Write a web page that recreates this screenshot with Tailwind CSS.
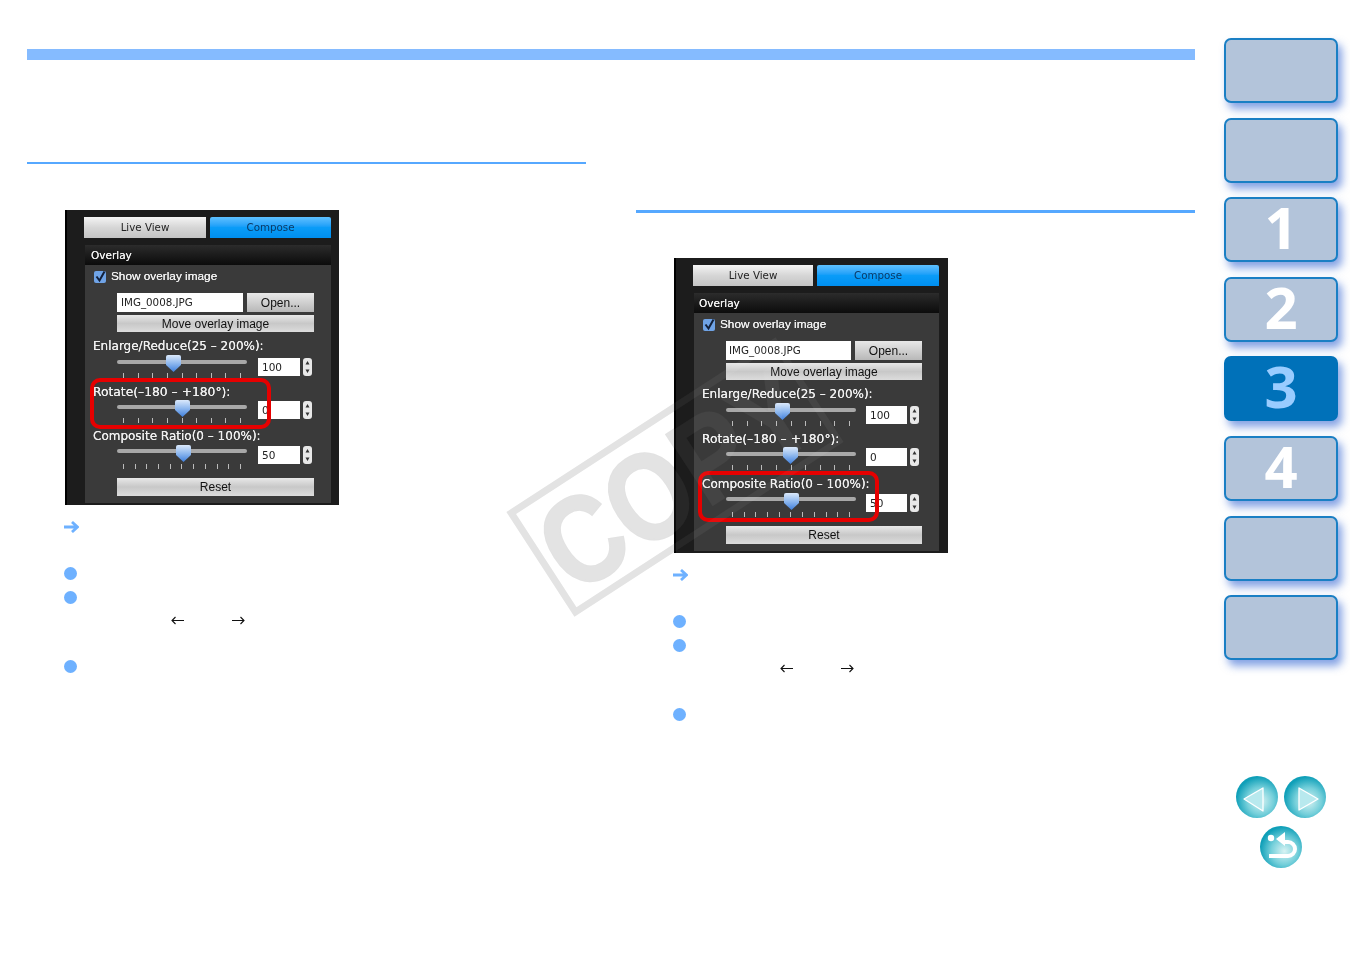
<!DOCTYPE html>
<html lang="en">
<head>
  <meta charset="UTF-8" />
  <title>Compose overlay</title>
  <script src="https://cdn.jsdelivr.net/npm/@tailwindcss/browser@4"></script>
</head>
<body class="bg-white font-['Liberation_Sans',sans-serif] overflow-hidden">

  <!-- shared gradients -->
  <svg class="absolute w-0 h-0">
    <defs>
      <linearGradient id="thumb" x1="0" y1="0" x2="0" y2="1"><stop offset="0" stop-color="#dbe9fb"/><stop offset="0.5" stop-color="#8db7ee"/><stop offset="1" stop-color="#3f7fdc"/></linearGradient>
      <radialGradient id="disc" cx="0.58" cy="0.6" r="0.58"><stop offset="0" stop-color="#d8f3f3"/><stop offset="0.55" stop-color="#74cfda"/><stop offset="1" stop-color="#0f9fb8"/></radialGradient>
    </defs>
  </svg>

  <!-- COPY watermark, under the panels -->
  <svg class="absolute inset-0 pointer-events-none" width="1350" height="954" viewBox="0 0 1350 954">
    <g transform="rotate(-33 675 477)" fill="#e2e2e2">
      <rect x="518" y="418" width="314" height="118" fill="none" stroke="#e2e2e2" stroke-width="7"/>
      <text x="675" y="522" text-anchor="middle" font-family="Liberation Sans" font-weight="700" font-size="124" textLength="298" lengthAdjust="spacingAndGlyphs" stroke="#e2e2e2" stroke-width="2">COPY</text>
    </g>
  </svg>

  <div class="flex w-[1350px] h-[954px] relative">
    <main class="w-[1168px] ml-[27px] pt-[49px]">
      <div class="h-[11px] bg-[#85bbff]"></div>

      <div class="flex gap-[50px]">
        <!-- left column -->
        <section class="w-[559px] pt-[102px]">
          <div class="h-[2px] bg-[#56a8ff]"></div>
          <div class="ml-[38px] mt-[46px] w-[274px] h-[295px] relative bg-[#1c1c1c] border-l-2 border-black text-[#f0f0f0] blur-[0.3px]">
            <div class="flex gap-[4px] pt-[7px] pl-[17px] font-['DejaVu_Sans',sans-serif] text-[10.3px]">
              <div class="w-[122px] h-[21px] pt-px flex items-center justify-center text-[#222] bg-linear-to-b from-[#f4f4f4] via-[#d6d6d6] to-[#c4c4c4]">Live View</div>
              <div class="w-[121px] h-[21px] pt-px flex items-center justify-center text-[#0b3a66] bg-linear-to-b from-[#5cc0ff] via-[#0a9cf8] to-[#008ff0] rounded-t-[2px]">Compose</div>
            </div>
            <div class="ml-[18px] mt-[7px] w-[246px]">
              <div class="h-[20px] pt-px flex items-center pl-[6px] text-[10.5px] bg-linear-to-b from-[#2c2c2c] to-[#0c0c0c] font-['DejaVu_Sans',sans-serif] [text-shadow:0_0_0.6px_#fff]">Overlay</div>
              <div class="h-[238px] bg-[#3a3a3a] pt-[3px]">
                <div class="h-[18px] flex items-center pl-[9px] gap-[5px] text-[11.8px] [text-shadow:0_0_0.5px_#fff]">
                  <svg width="12" height="12" viewBox="0 0 12 12"><rect width="12" height="12" rx="2" fill="#6fa3e6"/><path d="M2.5 5.5 L5.5 9.5 L10.5 0.5" fill="none" stroke="#12203a" stroke-width="2"/></svg>
                  <span>Show overlay image</span>
                </div>
                <div class="flex gap-[4px] ml-[32px] mt-[7px] h-[19px] text-[11.5px]">
                  <div class="w-[126px] bg-white text-[#222] pt-px flex items-center pl-[4px] font-['DejaVu_Sans',sans-serif] text-[10.3px]">IMG_0008.JPG</div>
                  <div class="w-[67px] flex items-center justify-center text-[#111] text-[12px] bg-linear-to-b from-[#e8e8e8] via-[#d0d0d0] to-[#b8b8b8]">Open...</div>
                </div>
                <div class="ml-[32px] mt-[3px] w-[197px] h-[17px] flex items-center justify-center text-[#111] text-[12px] bg-linear-to-b from-[#e8e8e8] via-[#c8c8c8] to-[#dcdcdc]">Move overlay image</div>

                <div class="mt-[5px] ml-[8px] h-[17px] flex items-center font-['DejaVu_Sans',sans-serif] text-[12px] [text-shadow:0_0_0.6px_#fff]">Enlarge/Reduce(25 – 200%):</div>
                <div class="flex ml-[32px] h-[26px]">
                  <div class="w-[130px] relative pt-[6px]">
                    <div class="h-[4px] rounded-full bg-[#a8a8a8]"></div>
                    <svg class="absolute left-[49px] top-[1px]" width="15" height="17" viewBox="0 0 15 17"><path d="M2 0 H13 Q15 0 15 2 V10 L7.5 17 L0 10 V2 Q0 0 2 0 Z" fill="url(#thumb)"/></svg>
                    <div class="flex justify-between px-[6px] mt-[9px]"><i class="w-px h-[5px] bg-[#bbb]"></i><i class="w-px h-[5px] bg-[#bbb]"></i><i class="w-px h-[5px] bg-[#bbb]"></i><i class="w-px h-[5px] bg-[#bbb]"></i><i class="w-px h-[5px] bg-[#bbb]"></i><i class="w-px h-[5px] bg-[#bbb]"></i><i class="w-px h-[5px] bg-[#bbb]"></i><i class="w-px h-[5px] bg-[#bbb]"></i><i class="w-px h-[5px] bg-[#bbb]"></i></div>
                  </div>
                  <div class="ml-[11px] mt-[4px] w-[42px] h-[18px] pt-px bg-white text-[#222] flex items-center pl-[4px] font-['DejaVu_Sans',sans-serif] text-[10.5px]">100</div>
                  <svg class="ml-[3px] mt-[4px]" width="9" height="18" viewBox="0 0 9 18"><rect width="9" height="18" rx="3" fill="#e8e8e8"/><path d="M4.5 3 L6.5 6.5 H2.5 Z M4.5 15 L6.5 11.5 H2.5 Z" fill="#333"/></svg>
                </div>

                <div class="mt-[4px] ml-[8px] h-[17px] flex items-center font-['DejaVu_Sans',sans-serif] text-[12.3px] [text-shadow:0_0_0.6px_#fff]">Rotate(–180 – +180°):</div>
                <div class="flex ml-[32px] h-[26px]">
                  <div class="w-[130px] relative pt-[4px]">
                    <div class="h-[4px] rounded-full bg-[#a8a8a8]"></div>
                    <svg class="absolute left-[58px] top-[-1px]" width="15" height="17" viewBox="0 0 15 17"><path d="M2 0 H13 Q15 0 15 2 V10 L7.5 17 L0 10 V2 Q0 0 2 0 Z" fill="url(#thumb)"/></svg>
                    <div class="flex justify-between px-[6px] mt-[9px]"><i class="w-px h-[5px] bg-[#bbb]"></i><i class="w-px h-[5px] bg-[#bbb]"></i><i class="w-px h-[5px] bg-[#bbb]"></i><i class="w-px h-[5px] bg-[#bbb]"></i><i class="w-px h-[5px] bg-[#bbb]"></i><i class="w-px h-[5px] bg-[#bbb]"></i><i class="w-px h-[5px] bg-[#bbb]"></i><i class="w-px h-[5px] bg-[#bbb]"></i><i class="w-px h-[5px] bg-[#bbb]"></i></div>
                  </div>
                  <div class="ml-[11px] w-[42px] h-[18px] pt-px bg-white text-[#222] flex items-center pl-[4px] font-['DejaVu_Sans',sans-serif] text-[10.5px]">0</div>
                  <svg class="ml-[3px]" width="9" height="18" viewBox="0 0 9 18"><rect width="9" height="18" rx="3" fill="#e8e8e8"/><path d="M4.5 3 L6.5 6.5 H2.5 Z M4.5 15 L6.5 11.5 H2.5 Z" fill="#333"/></svg>
                </div>

                <div class="ml-[8px] h-[17px] flex items-center font-['DejaVu_Sans',sans-serif] text-[12px] [text-shadow:0_0_0.6px_#fff]">Composite Ratio(0 – 100%):</div>
                <div class="flex ml-[32px] h-[34px]">
                  <div class="w-[130px] relative pt-[5px]">
                    <div class="h-[4px] rounded-full bg-[#a8a8a8]"></div>
                    <svg class="absolute left-[59px] top-[1px]" width="15" height="17" viewBox="0 0 15 17"><path d="M2 0 H13 Q15 0 15 2 V10 L7.5 17 L0 10 V2 Q0 0 2 0 Z" fill="url(#thumb)"/></svg>
                    <div class="flex justify-between px-[6px] mt-[11px]"><i class="w-px h-[5px] bg-[#bbb]"></i><i class="w-px h-[5px] bg-[#bbb]"></i><i class="w-px h-[5px] bg-[#bbb]"></i><i class="w-px h-[5px] bg-[#bbb]"></i><i class="w-px h-[5px] bg-[#bbb]"></i><i class="w-px h-[5px] bg-[#bbb]"></i><i class="w-px h-[5px] bg-[#bbb]"></i><i class="w-px h-[5px] bg-[#bbb]"></i><i class="w-px h-[5px] bg-[#bbb]"></i><i class="w-px h-[5px] bg-[#bbb]"></i><i class="w-px h-[5px] bg-[#bbb]"></i></div>
                  </div>
                  <div class="ml-[11px] mt-[2px] w-[42px] h-[18px] pt-px bg-white text-[#222] flex items-center pl-[4px] font-['DejaVu_Sans',sans-serif] text-[10.5px]">50</div>
                  <svg class="ml-[3px] mt-[2px]" width="9" height="18" viewBox="0 0 9 18"><rect width="9" height="18" rx="3" fill="#e8e8e8"/><path d="M4.5 3 L6.5 6.5 H2.5 Z M4.5 15 L6.5 11.5 H2.5 Z" fill="#333"/></svg>
                </div>
                <div class="ml-[32px] w-[197px] h-[18px] flex items-center justify-center text-[#111] text-[12px] bg-linear-to-b from-[#e8e8e8] via-[#c8c8c8] to-[#dcdcdc]">Reset</div>
              </div>
            </div>
            <!-- red highlight -->
            <div class="absolute left-[23px] top-[168px] w-[181px] h-[51px] border-[4px] border-[#e60000] rounded-[10px]"></div>
          </div>

          <div class="ml-[37px] mt-[10px] h-[24px] flex items-center">
            <svg width="15" height="12" viewBox="0 0 15 12"><path d="M0 6 H12 M8 1 L13.5 6 L8 11" fill="none" stroke="#6eb1ff" stroke-width="2.8"/></svg>
          </div>
          <div class="ml-[37px] mt-[22px] h-[24px] flex items-center"><div class="w-[13px] h-[13px] rounded-full bg-[#6eb1ff]"></div></div>
          <div class="ml-[37px] h-[24px] flex items-center"><div class="w-[13px] h-[13px] rounded-full bg-[#6eb1ff]"></div></div>
          <div class="ml-[144px] h-[22px] flex items-center gap-[48px]">
            <svg width="13" height="9" viewBox="0 0 13 9"><path d="M13 4.5 H1 M4.5 1 L1 4.5 L4.5 8" fill="none" stroke="#111" stroke-width="1.1"/></svg>
            <svg width="13" height="9" viewBox="0 0 13 9"><path d="M0 4.5 H12 M8.5 1 L12 4.5 L8.5 8" fill="none" stroke="#111" stroke-width="1.1"/></svg>
          </div>
          <div class="ml-[37px] mt-[23px] h-[24px] flex items-center"><div class="w-[13px] h-[13px] rounded-full bg-[#6eb1ff]"></div></div>
        </section>

        <!-- right column -->
        <section class="w-[559px] pt-[150px]">
          <div class="h-[3px] bg-[#56a8ff]"></div>
          <div class="ml-[38px] mt-[45px] w-[274px] h-[295px] relative bg-[#1c1c1c] border-l-2 border-black text-[#f0f0f0] blur-[0.3px]">
            <div class="flex gap-[4px] pt-[7px] pl-[17px] font-['DejaVu_Sans',sans-serif] text-[10.3px]">
              <div class="w-[120px] h-[21px] pt-px flex items-center justify-center text-[#222] bg-linear-to-b from-[#f4f4f4] via-[#d6d6d6] to-[#c4c4c4]">Live View</div>
              <div class="w-[122px] h-[21px] pt-px flex items-center justify-center text-[#0b3a66] bg-linear-to-b from-[#5cc0ff] via-[#0a9cf8] to-[#008ff0] rounded-t-[2px]">Compose</div>
            </div>
            <div class="ml-[18px] mt-[7px] w-[245px]">
              <div class="h-[20px] pt-px flex items-center pl-[5px] text-[10.5px] bg-linear-to-b from-[#2c2c2c] to-[#0c0c0c] font-['DejaVu_Sans',sans-serif] [text-shadow:0_0_0.6px_#fff]">Overlay</div>
              <div class="h-[238px] bg-[#3a3a3a] pt-[3px]">
                <div class="h-[18px] flex items-center pl-[9px] gap-[5px] text-[11.8px] [text-shadow:0_0_0.5px_#fff]">
                  <svg width="12" height="12" viewBox="0 0 12 12"><rect width="12" height="12" rx="2" fill="#6fa3e6"/><path d="M2.5 5.5 L5.5 9.5 L10.5 0.5" fill="none" stroke="#12203a" stroke-width="2"/></svg>
                  <span>Show overlay image</span>
                </div>
                <div class="flex gap-[4px] ml-[32px] mt-[7px] h-[19px] text-[11.5px]">
                  <div class="w-[125px] bg-white text-[#222] pt-px flex items-center pl-[3px] font-['DejaVu_Sans',sans-serif] text-[10.3px]">IMG_0008.JPG</div>
                  <div class="w-[67px] flex items-center justify-center text-[#111] text-[12px] bg-linear-to-b from-[#e8e8e8] via-[#d0d0d0] to-[#b8b8b8]">Open...</div>
                </div>
                <div class="ml-[32px] mt-[3px] w-[196px] h-[17px] flex items-center justify-center text-[#111] text-[12px] bg-linear-to-b from-[#e8e8e8] via-[#c8c8c8] to-[#dcdcdc]">Move overlay image</div>

                <div class="mt-[5px] ml-[8px] h-[17px] flex items-center font-['DejaVu_Sans',sans-serif] text-[12px] [text-shadow:0_0_0.6px_#fff]">Enlarge/Reduce(25 – 200%):</div>
                <div class="flex ml-[32px] h-[26px]">
                  <div class="w-[130px] relative pt-[6px]">
                    <div class="h-[4px] rounded-full bg-[#a8a8a8]"></div>
                    <svg class="absolute left-[49px] top-[1px]" width="15" height="17" viewBox="0 0 15 17"><path d="M2 0 H13 Q15 0 15 2 V10 L7.5 17 L0 10 V2 Q0 0 2 0 Z" fill="url(#thumb)"/></svg>
                    <div class="flex justify-between px-[6px] mt-[9px]"><i class="w-px h-[5px] bg-[#bbb]"></i><i class="w-px h-[5px] bg-[#bbb]"></i><i class="w-px h-[5px] bg-[#bbb]"></i><i class="w-px h-[5px] bg-[#bbb]"></i><i class="w-px h-[5px] bg-[#bbb]"></i><i class="w-px h-[5px] bg-[#bbb]"></i><i class="w-px h-[5px] bg-[#bbb]"></i><i class="w-px h-[5px] bg-[#bbb]"></i><i class="w-px h-[5px] bg-[#bbb]"></i></div>
                  </div>
                  <div class="ml-[10px] mt-[4px] w-[41px] h-[18px] pt-px bg-white text-[#222] flex items-center pl-[4px] font-['DejaVu_Sans',sans-serif] text-[10.5px]">100</div>
                  <svg class="ml-[3px] mt-[4px]" width="9" height="18" viewBox="0 0 9 18"><rect width="9" height="18" rx="3" fill="#e8e8e8"/><path d="M4.5 3 L6.5 6.5 H2.5 Z M4.5 15 L6.5 11.5 H2.5 Z" fill="#333"/></svg>
                </div>

                <div class="mt-[3px] ml-[8px] h-[17px] flex items-center font-['DejaVu_Sans',sans-serif] text-[12.3px] [text-shadow:0_0_0.6px_#fff]">Rotate(–180 – +180°):</div>
                <div class="flex ml-[32px] h-[27px]">
                  <div class="w-[130px] relative pt-[4px]">
                    <div class="h-[4px] rounded-full bg-[#a8a8a8]"></div>
                    <svg class="absolute left-[57px] top-[-1px]" width="15" height="17" viewBox="0 0 15 17"><path d="M2 0 H13 Q15 0 15 2 V10 L7.5 17 L0 10 V2 Q0 0 2 0 Z" fill="url(#thumb)"/></svg>
                    <div class="flex justify-between px-[6px] mt-[9px]"><i class="w-px h-[5px] bg-[#bbb]"></i><i class="w-px h-[5px] bg-[#bbb]"></i><i class="w-px h-[5px] bg-[#bbb]"></i><i class="w-px h-[5px] bg-[#bbb]"></i><i class="w-px h-[5px] bg-[#bbb]"></i><i class="w-px h-[5px] bg-[#bbb]"></i><i class="w-px h-[5px] bg-[#bbb]"></i><i class="w-px h-[5px] bg-[#bbb]"></i><i class="w-px h-[5px] bg-[#bbb]"></i></div>
                  </div>
                  <div class="ml-[10px] w-[41px] h-[18px] pt-px bg-white text-[#222] flex items-center pl-[4px] font-['DejaVu_Sans',sans-serif] text-[10.5px]">0</div>
                  <svg class="ml-[3px]" width="9" height="18" viewBox="0 0 9 18"><rect width="9" height="18" rx="3" fill="#e8e8e8"/><path d="M4.5 3 L6.5 6.5 H2.5 Z M4.5 15 L6.5 11.5 H2.5 Z" fill="#333"/></svg>
                </div>

                <div class="ml-[8px] h-[17px] flex items-center font-['DejaVu_Sans',sans-serif] text-[12px] [text-shadow:0_0_0.6px_#fff]">Composite Ratio(0 – 100%):</div>
                <div class="flex ml-[32px] h-[34px]">
                  <div class="w-[130px] relative pt-[5px]">
                    <div class="h-[4px] rounded-full bg-[#a8a8a8]"></div>
                    <svg class="absolute left-[58px] top-[1px]" width="15" height="17" viewBox="0 0 15 17"><path d="M2 0 H13 Q15 0 15 2 V10 L7.5 17 L0 10 V2 Q0 0 2 0 Z" fill="url(#thumb)"/></svg>
                    <div class="flex justify-between px-[6px] mt-[11px]"><i class="w-px h-[5px] bg-[#bbb]"></i><i class="w-px h-[5px] bg-[#bbb]"></i><i class="w-px h-[5px] bg-[#bbb]"></i><i class="w-px h-[5px] bg-[#bbb]"></i><i class="w-px h-[5px] bg-[#bbb]"></i><i class="w-px h-[5px] bg-[#bbb]"></i><i class="w-px h-[5px] bg-[#bbb]"></i><i class="w-px h-[5px] bg-[#bbb]"></i><i class="w-px h-[5px] bg-[#bbb]"></i><i class="w-px h-[5px] bg-[#bbb]"></i><i class="w-px h-[5px] bg-[#bbb]"></i></div>
                  </div>
                  <div class="ml-[10px] mt-[2px] w-[41px] h-[18px] pt-px bg-white text-[#222] flex items-center pl-[4px] font-['DejaVu_Sans',sans-serif] text-[10.5px]">50</div>
                  <svg class="ml-[3px] mt-[2px]" width="9" height="18" viewBox="0 0 9 18"><rect width="9" height="18" rx="3" fill="#e8e8e8"/><path d="M4.5 3 L6.5 6.5 H2.5 Z M4.5 15 L6.5 11.5 H2.5 Z" fill="#333"/></svg>
                </div>
                <div class="ml-[32px] w-[196px] h-[18px] flex items-center justify-center text-[#111] text-[12px] bg-linear-to-b from-[#e8e8e8] via-[#c8c8c8] to-[#dcdcdc]">Reset</div>
              </div>
            </div>
            <!-- red highlight -->
            <div class="absolute left-[22px] top-[213px] w-[181px] h-[51px] border-[4px] border-[#e60000] rounded-[10px]"></div>
          </div>

          <div class="ml-[37px] mt-[10px] h-[24px] flex items-center">
            <svg width="15" height="12" viewBox="0 0 15 12"><path d="M0 6 H12 M8 1 L13.5 6 L8 11" fill="none" stroke="#6eb1ff" stroke-width="2.8"/></svg>
          </div>
          <div class="ml-[37px] mt-[22px] h-[24px] flex items-center"><div class="w-[13px] h-[13px] rounded-full bg-[#6eb1ff]"></div></div>
          <div class="ml-[37px] h-[24px] flex items-center"><div class="w-[13px] h-[13px] rounded-full bg-[#6eb1ff]"></div></div>
          <div class="ml-[144px] h-[22px] flex items-center gap-[48px]">
            <svg width="13" height="9" viewBox="0 0 13 9"><path d="M13 4.5 H1 M4.5 1 L1 4.5 L4.5 8" fill="none" stroke="#111" stroke-width="1.1"/></svg>
            <svg width="13" height="9" viewBox="0 0 13 9"><path d="M0 4.5 H12 M8.5 1 L12 4.5 L8.5 8" fill="none" stroke="#111" stroke-width="1.1"/></svg>
          </div>
          <div class="ml-[37px] mt-[23px] h-[24px] flex items-center"><div class="w-[13px] h-[13px] rounded-full bg-[#6eb1ff]"></div></div>
        </section>
      </div>
    </main>

    <!-- chapter nav -->
    <nav class="ml-[29px] pt-[38px] w-[114px] flex flex-col items-stretch">
      <div class="h-[65px] rounded-[7px] bg-[#b3c4da] border-2 border-[#1a7fc4] shadow-[4px_6px_9px_rgba(50,100,210,0.6)]"></div>
      <div class="mt-[15px] h-[65px] rounded-[7px] bg-[#b3c4da] border-2 border-[#1a7fc4] shadow-[4px_6px_9px_rgba(50,100,210,0.6)]"></div>
      <div class="mt-[14px] h-[65px] pb-[6px] rounded-[7px] bg-[#b3c4da] border-2 border-[#1a7fc4] shadow-[4px_6px_9px_rgba(50,100,210,0.6)] flex items-center justify-center text-white font-bold text-[58px] leading-none font-['Open_Sans',sans-serif]">1</div>
      <div class="mt-[15px] h-[65px] pb-[6px] rounded-[7px] bg-[#b3c4da] border-2 border-[#1a7fc4] shadow-[4px_6px_9px_rgba(50,100,210,0.6)] flex items-center justify-center text-white font-bold text-[58px] leading-none font-['Open_Sans',sans-serif]">2</div>
      <div class="mt-[14px] h-[65px] pb-[6px] rounded-[7px] bg-[#0071b9] shadow-[4px_6px_9px_rgba(50,100,210,0.6)] flex items-center justify-center text-[#99ccff] font-bold text-[58px] leading-none font-['Open_Sans',sans-serif]">3</div>
      <div class="mt-[15px] h-[65px] pb-[6px] rounded-[7px] bg-[#b3c4da] border-2 border-[#1a7fc4] shadow-[4px_6px_9px_rgba(50,100,210,0.6)] flex items-center justify-center text-white font-bold text-[58px] leading-none font-['Open_Sans',sans-serif]">4</div>
      <div class="mt-[15px] h-[65px] rounded-[7px] bg-[#b3c4da] border-2 border-[#1a7fc4] shadow-[4px_6px_9px_rgba(50,100,210,0.6)]"></div>
      <div class="mt-[14px] h-[65px] rounded-[7px] bg-[#b3c4da] border-2 border-[#1a7fc4] shadow-[4px_6px_9px_rgba(50,100,210,0.6)]"></div>

      <!-- prev / next / back -->
      <svg class="mt-[115px] ml-[11px]" width="92" height="94" viewBox="0 0 92 94">
        <circle cx="22" cy="22" r="21" fill="url(#disc)"/>
        <path d="M28 13 L9 24 L28 36 Z" fill="#b8e9ee" stroke="#fff" stroke-width="1.3" stroke-linejoin="round"/>
        <circle cx="70" cy="22" r="21" fill="url(#disc)"/>
        <path d="M64 13 L83 24 L64 35 Z" fill="#b8e9ee" stroke="#fff" stroke-width="1.3" stroke-linejoin="round"/>
        <circle cx="46" cy="72" r="21" fill="url(#disc)"/>
        <circle cx="36" cy="63" r="3.2" fill="#fff"/>
        <path d="M34 81 H53 A6.5 6.5 0 0 0 53 67 H48" fill="none" stroke="#fff" stroke-width="4"/>
        <path d="M41 64 L50 57 V71 Z" fill="#fff"/>
      </svg>
    </nav>

    <!-- faint trace of the watermark across the panel -->
    <svg class="absolute inset-0 pointer-events-none" width="1350" height="954" viewBox="0 0 1350 954">
      <g transform="rotate(-33 675 477)" fill="#ffffff" fill-opacity="0.05">
        <rect x="518" y="418" width="314" height="118" fill="none" stroke="#ffffff" stroke-opacity="0.05" stroke-width="7"/>
        <text x="675" y="522" text-anchor="middle" font-family="Liberation Sans" font-weight="700" font-size="124" textLength="298" lengthAdjust="spacingAndGlyphs">COPY</text>
      </g>
    </svg>
  </div>
</body>
</html>
